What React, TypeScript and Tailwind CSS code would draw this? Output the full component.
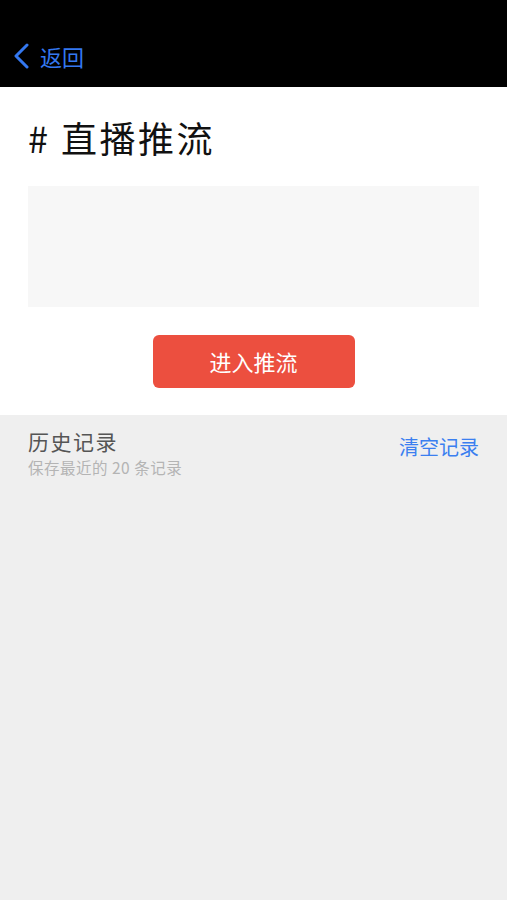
export default function App() {
  return (
    <div
      className="flex min-h-[900px] w-[507px] flex-col bg-[#efefef]"
      style={{ fontFamily: '"Noto Sans CJK SC", "Noto Sans", sans-serif' }}
    >
      <div className="flex h-[87px] items-end bg-black pb-[18px] pl-[12px]">
        <button className="flex items-center gap-[8px] text-[#3478f0]">
          <svg width="20" height="26" viewBox="0 0 20 26" fill="none">
            <path d="M15 2 L4 13 L15 24" stroke="#3478f0" strokeWidth="3" strokeLinecap="round" strokeLinejoin="round" />
          </svg>
          <span className="text-[22px] leading-[24px]">返回</span>
        </button>
      </div>

      <div className="flex flex-col bg-white px-[28px] pb-[27px] pt-[28px]">
        <h1 className="text-[36px] leading-[44px] tracking-[2.5px] text-[#111]">
          # 直播推流
        </h1>
        <div className="mt-[27px] h-[121px] bg-[#f7f7f7]" />
        <div className="mt-[28px] flex justify-center">
          <button className="h-[53px] w-[202px] rounded-[6px] bg-[#ec4f3f] text-[22px] text-white">
            进入推流
          </button>
        </div>
      </div>

      <div className="flex items-start justify-between px-[28px] pt-[11px]">
        <div className="flex flex-col">
          <span className="text-[21px] leading-[30px] tracking-[1.5px] text-[#555]">历史记录</span>
          <span className="text-[15.5px] leading-[22px] tracking-[0.5px] text-[#b4b4b4]">保存最近的 20 条记录</span>
        </div>
        <button className="mt-[7px] text-[20px] leading-[28px] text-[#3b7ff0]">清空记录</button>
      </div>
    </div>
  )
}
